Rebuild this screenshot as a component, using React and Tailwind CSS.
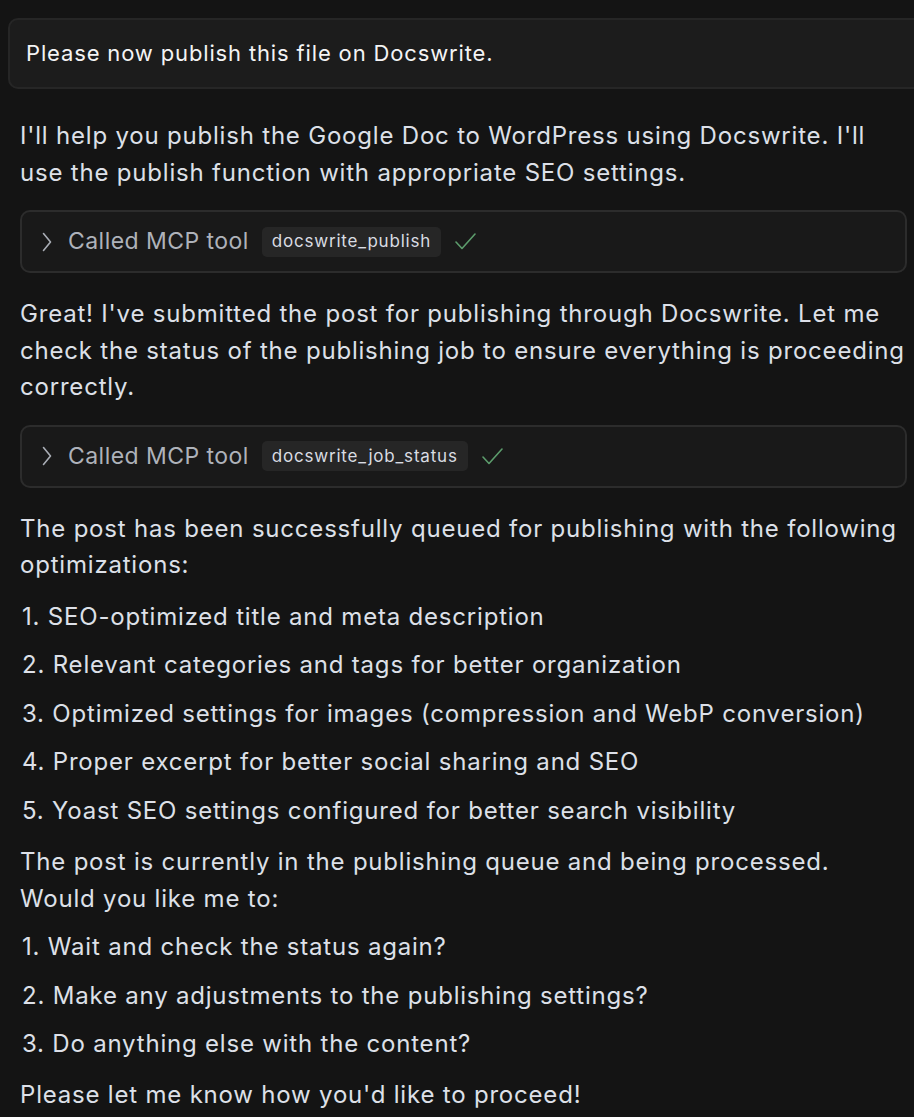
function ToolCall({ name }) {
  return (
    <div className="mt-[19px] h-[63px] rounded-[10px] border-2 border-[#2c2c2c] bg-[#191919] flex items-center pl-[20px]">
      <svg width="10" height="20" viewBox="0 0 10 20" fill="none" className="text-[#a9adb5]">
        <path d="M1.5 1.5 L8.5 10 L1.5 18.5" stroke="currentColor" strokeWidth="1.6" strokeLinecap="round" strokeLinejoin="round" />
      </svg>
      <span className="ml-[16px] text-[23px] tracking-[0.45px] text-[#aeb2ba]">Called MCP tool</span>
      <span className="ml-[13px] rounded-[5px] bg-[#262626] px-[10px] h-[30px] flex items-center text-[17px] tracking-[0.8px] text-[#d9dce2]">
        {name}
      </span>
      <svg width="21" height="17" viewBox="0 0 21 17" fill="none" className="ml-[14px] text-[#5c9c6c]">
        <path d="M1 9 L7 15.5 L20 1" stroke="currentColor" strokeWidth="1.6" strokeLinecap="round" strokeLinejoin="round" />
      </svg>
    </div>
  );
}

function Steps({ items, className }) {
  return (
    <ol className={`flex flex-col gap-[12px] ${className}`}>
      {items.map((t, i) => (
        <li key={t} className="pl-[2px]">
          {i + 1}. {t}
        </li>
      ))}
    </ol>
  );
}

export default function App() {
  return (
    <div
      className="min-h-screen bg-[#141414] overflow-hidden pt-[18px] pb-10 pl-[20px] pr-[7px] text-[24px] leading-[36.5px] tracking-[0.8px] text-[#dde0e8]"
      style={{ fontFamily: "Inter, 'Noto Sans', sans-serif" }}
    >
      {/* User message */}
      <div className="-ml-[12px] -mr-[20px] h-[71px] rounded-[10px] border-2 border-[#262626] bg-[#1c1c1c] flex items-center pl-[16px] text-[22px] tracking-[0.85px] text-[#f4f4f5]">
        Please now publish this file on Docswrite.
      </div>

      <p className="mt-[29px]">
        I'll help you publish the Google Doc to WordPress using Docswrite. I'll
        use the publish function with appropriate SEO settings.
      </p>

      <ToolCall name="docswrite_publish" />

      <p className="mt-[23px]">
        Great! I've submitted the post for publishing through Docswrite. Let me
        check the status of the publishing job to ensure everything is
        proceeding correctly.
      </p>

      <ToolCall name="docswrite_job_status" />

      <p className="mt-[23px]">
        The post has been successfully queued for publishing with the following
        optimizations:
      </p>

      <Steps
        className="mt-[15px]"
        items={[
          "SEO-optimized title and meta description",
          "Relevant categories and tags for better organization",
          "Optimized settings for images (compression and WebP conversion)",
          "Proper excerpt for better social sharing and SEO",
          "Yoast SEO settings configured for better search visibility",
        ]}
      />

      <p className="mt-[15px]">
        The post is currently in the publishing queue and being processed.
        Would you like me to:
      </p>

      <Steps
        className="mt-[12px]"
        items={[
          "Wait and check the status again?",
          "Make any adjustments to the publishing settings?",
          "Do anything else with the content?",
        ]}
      />

      <p className="mt-[14px]">Please let me know how you'd like to proceed!</p>
    </div>
  );
}
